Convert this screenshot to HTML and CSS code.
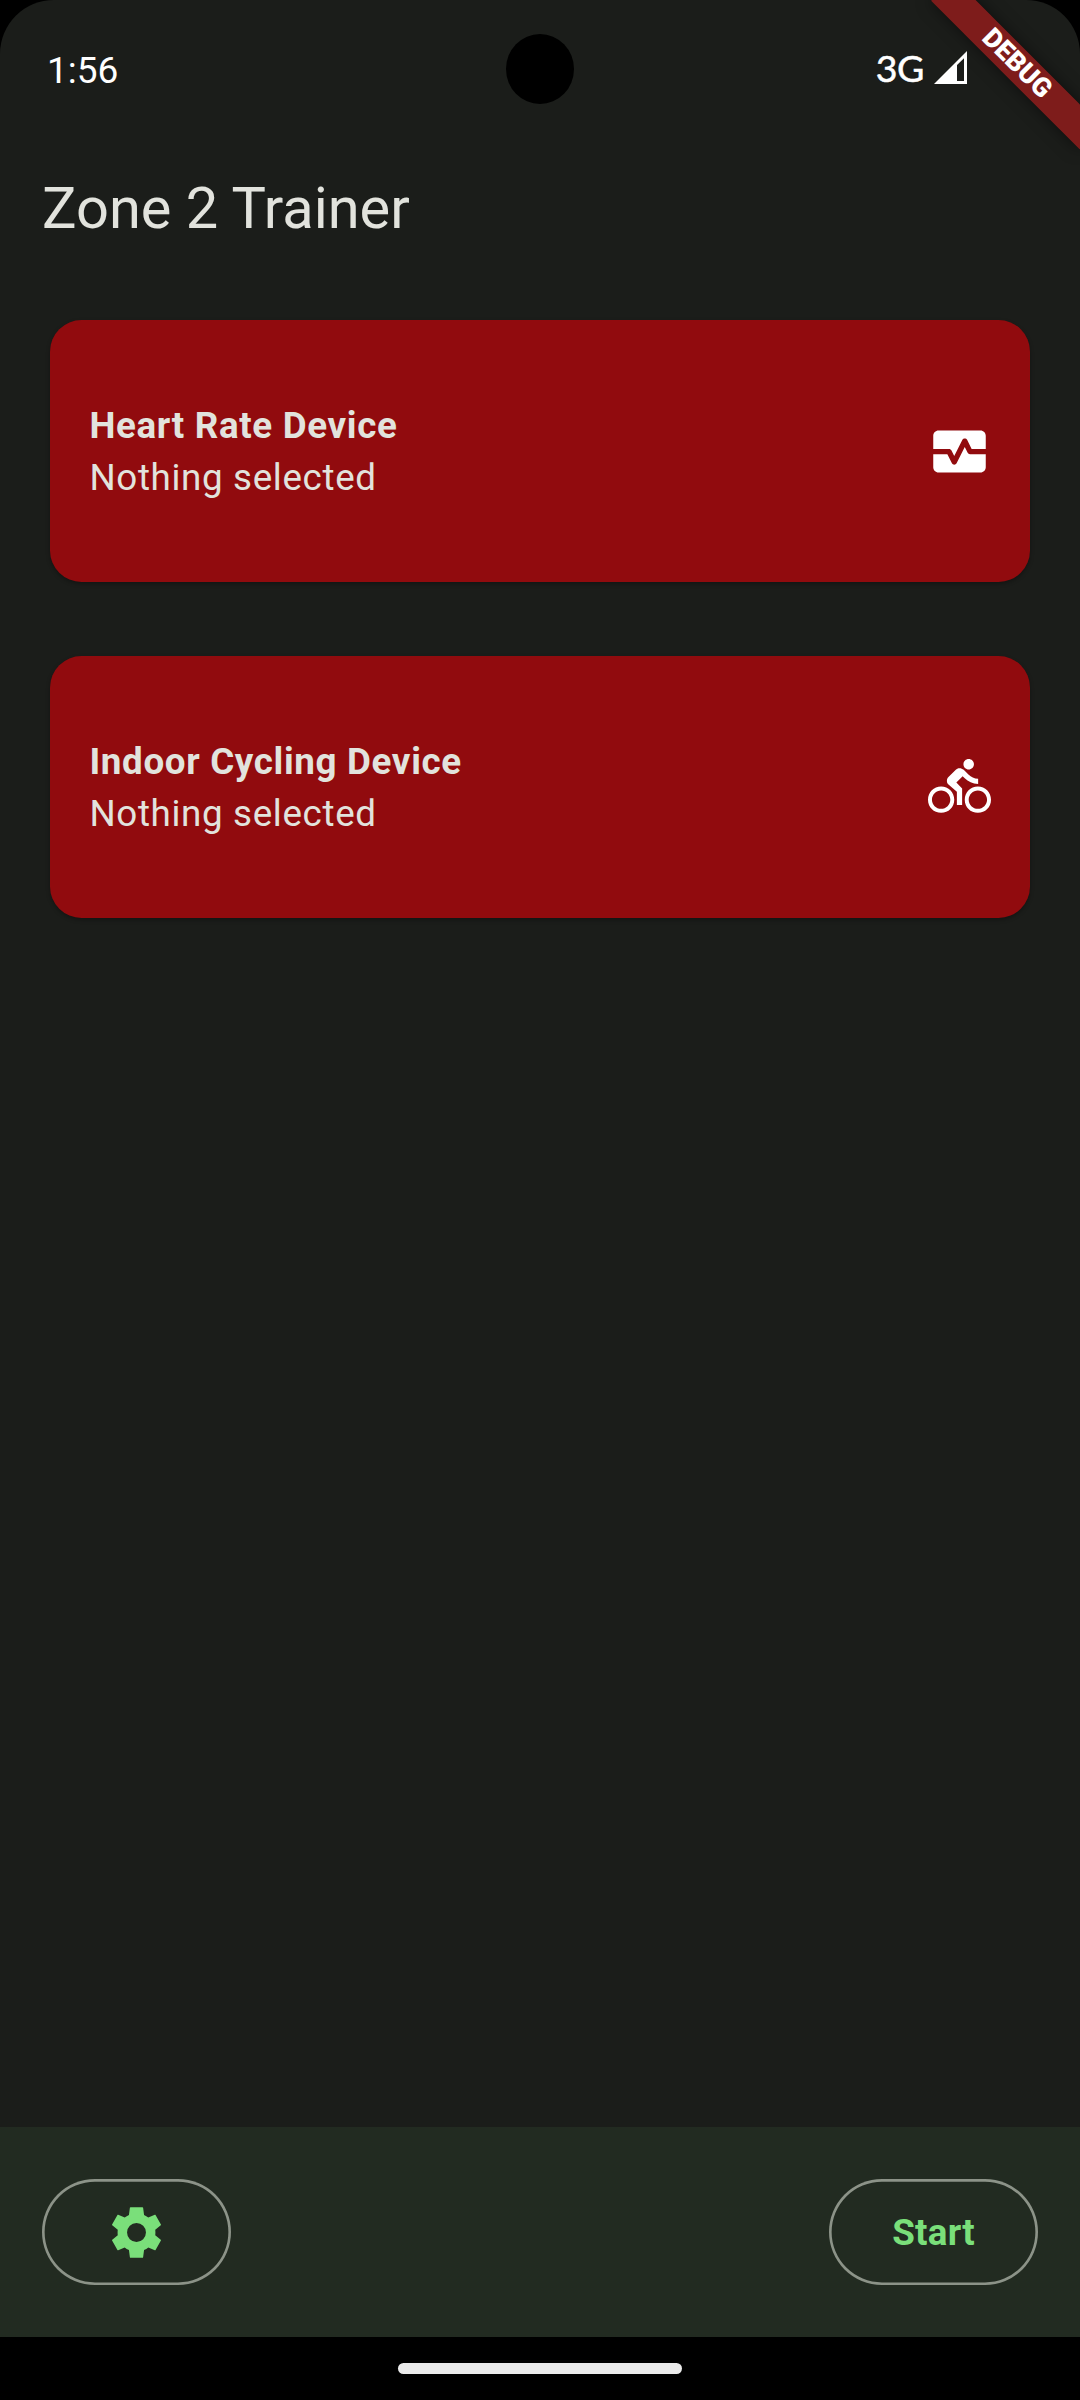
FILE: index.html
```html
<!DOCTYPE html>
<html lang="en">
<head>
<meta charset="utf-8">
<title>Zone 2 Trainer</title>
<link rel="stylesheet" href="styles.css">
</head>
<body>
<div class="device">
  <div class="screen">
    <header class="status-bar">
      <span class="clock">1:56</span>
      <span class="network">
        <span class="network-type">3G</span>
        <svg class="signal" viewBox="0 0 33 33"><path fill="#fff" fill-rule="evenodd" d="M33 0V33H0ZM30 7.200L23 14V30H30Z"/></svg>
      </span>
    </header>
    <span class="camera"></span>
    <div class="banner-clip"><div class="debug-banner">DEBUG</div></div>

    <h1 class="title">Zone 2 Trainer</h1>

    <main class="devices">
      <section class="card">
        <div class="card-text">
          <strong class="card-name">Heart Rate Device</strong>
          <span class="card-status">Nothing selected</span>
        </div>
        <svg class="icon" viewBox="0 0 24 24"><path d="M15.11 12.45L14 10.24l-3.11 6.21c-.16.34-.51.55-.89.55s-.73-.21-.89-.55L7.38 13H2v5c0 1.1.9 2 2 2h16c1.1 0 2-.9 2-2v-5h-6c-.38 0-.73-.21-.89-.55z"/><path d="M20 4H4c-1.1 0-2 .9-2 2v5h6c.38 0 .73.21.89.55L10 13.76l3.11-6.21c.34-.68 1.45-.68 1.79 0L16.62 11H22V6c0-1.1-.9-2-2-2z"/></svg>
      </section>
      <section class="card">
        <div class="card-text">
          <strong class="card-name">Indoor Cycling Device</strong>
          <span class="card-status">Nothing selected</span>
        </div>
        <svg class="icon" viewBox="0 0 24 24"><path d="M15.5 5.5c1.1 0 2-.9 2-2s-.9-2-2-2-2 .9-2 2 .9 2 2 2zM5 12c-2.8 0-5 2.2-5 5s2.2 5 5 5 5-2.2 5-5-2.200-5-5-5zm0 8.500c-1.900 0-3.500-1.600-3.500-3.500s1.600-3.500 3.500-3.500 3.500 1.600 3.500 3.500-1.600 3.500-3.500 3.500zm5.800-10l2.400-2.400.8.8c1.300 1.300 3 2.100 5.100 2.100V9c-1.500 0-2.700-.6-3.600-1.500l-1.900-1.900c-.5-.4-1-.6-1.600-.6s-1.100.2-1.400.6L7.800 8.400c-.4.4-.6.9-.6 1.400 0 .6.2 1.100.6 1.400L11 14v5h2v-6.200l-2.200-2.300zM19 12c-2.800 0-5 2.200-5 5s2.200 5 5 5 5-2.200 5-5-2.200-5-5-5zm0 8.500c-1.900 0-3.500-1.600-3.500-3.500s1.600-3.500 3.500-3.500 3.500 1.600 3.500 3.500-1.600 3.500-3.500 3.500z"/></svg>
      </section>
    </main>

    <footer class="action-bar">
      <button class="pill pill-settings" aria-label="Settings">
        <svg class="icon icon-green" viewBox="0 0 24 24"><path fill-rule="evenodd" d="M9.72 2.4H14.28C14.4 2.4 14.5 2.48 14.52 2.6L14.88 5.3C15.48 5.55 16 5.88 16.5 6.27L18.97 5.28C19.08 5.24 19.2 5.28 19.26 5.38L21.3 8.95C21.36 9.06 21.34 9.2 21.24 9.28L19.14 10.95C19.18 11.3 19.2 11.65 19.2 12C19.2 12.35 19.18 12.7 19.14 13.05L21.24 14.72C21.34 14.8 21.36 14.94 21.3 15.05L19.26 18.62C19.2 18.72 19.08 18.76 18.97 18.72L16.5 17.73C16 18.12 15.48 18.45 14.88 18.7L14.52 21.4C14.5 21.52 14.4 21.6 14.28 21.6H9.72C9.6 21.6 9.5 21.52 9.48 21.4L9.12 18.7C8.52 18.45 8 18.12 7.5 17.73L5.03 18.72C4.92 18.76 4.8 18.72 4.74 18.62L2.7 15.05C2.64 14.94 2.66 14.8 2.76 14.72L4.86 13.05C4.82 12.7 4.8 12.35 4.8 12C4.8 11.65 4.82 11.3 4.86 10.95L2.76 9.28C2.66 9.2 2.64 9.06 2.7 8.95L4.74 5.38C4.8 5.28 4.92 5.24 5.03 5.28L7.5 6.27C8 5.88 8.52 5.55 9.12 5.3L9.48 2.6C9.5 2.48 9.6 2.4 9.72 2.4ZM12 15.6a3.6 3.6 0 1 0 0-7.2 3.6 3.6 0 0 0 0 7.2Z"/></svg>
      </button>
      <button class="pill pill-start">Start</button>
    </footer>
  </div>
  <nav class="nav-bar"><span class="nav-handle"></span></nav>
</div>
</body>
</html>
```
FILE: styles.css
```css
* {
  box-sizing: border-box;
}

body {
  margin: 0;
  background: #000;
  font-family: Roboto, "Liberation Sans", sans-serif;
}

.device {
  display: flex;
  flex-direction: column;
  width: 1080px;
  height: 2400px;
  overflow: hidden;
}

.screen {
  position: relative;
  flex: 1;
  display: flex;
  flex-direction: column;
  background: #1b1d1a;
  border-radius: 54px 54px 0 0;
  overflow: hidden;
}

.status-bar {
  display: flex;
  justify-content: space-between;
  height: 136px;
  padding: 48px 113px 0 47px;
  color: #fff;
  font-size: 37px;
  line-height: 44px;
}

.clock {
  padding-top: 1px;
}

.network {
  display: flex;
  gap: 10px;
}

.network-type {
  font-family: Lato, sans-serif;
  font-size: 37.5px;
  font-weight: 400;
  line-height: 39px;
  letter-spacing: -0.5px;
  -webkit-text-stroke: 0.5px #fff;
}

.signal {
  width: 33px;
  height: 33px;
  margin-top: 3px;
}

.camera {
  position: absolute;
  left: 506px;
  top: 34px;
  width: 68px;
  height: 70px;
  border-radius: 50%;
  background: #000;
}

.banner-clip {
  position: absolute;
  inset: 0 0 auto auto;
  width: 300px;
  height: 300px;
  overflow: hidden;
}

.debug-banner {
  position: absolute;
  left: 195px;
  top: 73.5px;
  width: 210px;
  height: 31.5px;
  transform: rotate(45deg);
  transform-origin: 105px -73.5px;
  background: rgba(183, 28, 28, 0.63);
  box-shadow: 0 0 16px rgba(0, 0, 0, 0.5);
  color: #fff;
  font-size: 26.775px;
  font-weight: 900;
  line-height: 31.5px;
  text-align: center;
}

.title {
  margin: 0;
  height: 147px;
  padding-left: 42px;
  color: #e2e3dd;
  font-size: 57.75px;
  font-weight: 400;
  line-height: 144px;
}

.devices {
  flex: 1;
  display: flex;
  flex-direction: column;
  gap: 73.7px;
  padding: 37px 50px 0;
}

.card {
  display: flex;
  align-items: center;
  justify-content: space-between;
  height: 262px;
  padding: 0.4px 39.4px 0;
  border-radius: 31.5px;
  background: #910b0e;
  box-shadow: 0 2px 4px rgba(0, 0, 0, 0.3);
}

.card-text {
  display: flex;
  flex-direction: column;
  padding-top: 1.5px;
  color: #e2e3dd;
  font-size: 36.75px;
  line-height: 52px;
  letter-spacing: 0.66px;
}

.icon {
  width: 63px;
  height: 63px;
  fill: #fff;
}

.icon-green {
  fill: #7adf7a;
}

.action-bar {
  display: flex;
  align-items: center;
  justify-content: space-between;
  height: 210px;
  padding: 0 42px;
  background: #222b21;
}

.pill {
  display: flex;
  align-items: center;
  justify-content: center;
  height: 106px;
  padding: 0 63px;
  border: 0;
  border-radius: 53px;
  background: none;
  box-shadow: inset 0 0 0 2.625px #8c9388;
  color: #7adf7a;
  font: 700 36.75px Roboto, sans-serif;
  letter-spacing: 0.26px;
}

.nav-bar {
  display: flex;
  align-items: center;
  justify-content: center;
  height: 63px;
}

.nav-handle {
  width: 284px;
  height: 11px;
  border-radius: 5.5px;
  background: #ebebeb;
}
```
